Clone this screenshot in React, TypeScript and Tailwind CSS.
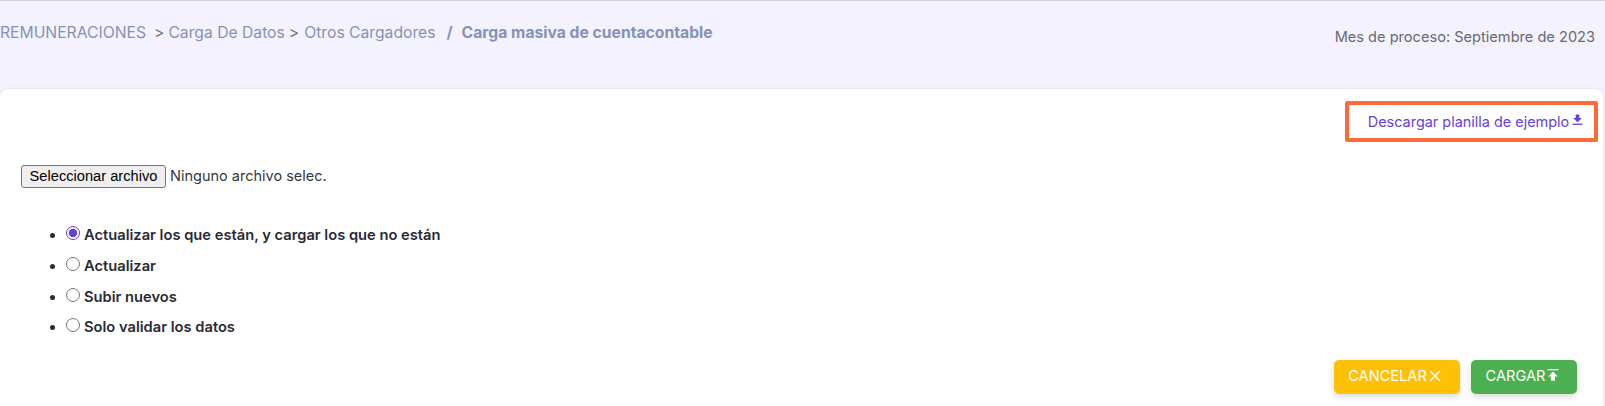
import { X } from "lucide-react";

const options = [
  { label: "Actualizar los que están, y cargar los que no están", checked: true },
  { label: "Actualizar", checked: false },
  { label: "Subir nuevos", checked: false },
  { label: "Solo validar los datos", checked: false },
];

function UploadIcon() {
  return (
    <svg width="12" height="13" viewBox="0 0 12 13" fill="currentColor" className="ml-[2px] mt-[-3px]">
      <rect x="0.5" y="0" width="11" height="1.3" />
      <path d="M6 2.4 10.8 7.4H8v4.4H4V7.4H1.2z" />
    </svg>
  );
}

function DownloadIcon() {
  return (
    <svg width="11" height="12" viewBox="0 0 11 12" fill="currentColor" className="ml-[3px] mt-[-4px]">
      <path d="M3.7 0.5h3.6v3.6h2.6L5.5 8.2 1.1 4.1h2.6z" />
      <rect x="0.5" y="9.6" width="10" height="1.3" />
    </svg>
  );
}

export default function App() {
  return (
    <div className="flex h-[406px] w-[1605px] flex-col overflow-hidden border-t border-[#d6d3e4] bg-[#f4f2fe] font-['Inter',sans-serif]">
      <header className="flex h-[88px] items-start justify-between pr-[10px]">
        <div className="flex items-center pt-[22px] text-[15.7px] leading-5 text-[#8492b6]">
          <span>REMUNERACIONES</span>
          <span className="ml-[8px] text-[#6b7280]">&gt;</span>
          <span className="ml-[4px]">Carga De Datos</span>
          <span className="ml-[4px] text-[#6b7280]">&gt;</span>
          <span className="ml-[5px]">Otros Cargadores</span>
          <span className="ml-[11px] font-bold">/</span>
          <span className="ml-[9px] font-bold">Carga masiva de cuentacontable</span>
        </div>
        <div className="pt-[26px] text-[14.6px] leading-5 text-[#666a73]">Mes de proceso: Septiembre de 2023</div>
      </header>

      <main className="mr-[2px] flex flex-1 flex-col rounded-t-[8px] bg-white shadow-[0_0_3px_rgba(80,70,140,0.14)]">
        <div className="flex justify-end pr-[5px] pt-[12px]">
          <a className="flex h-[41px] w-[253px] items-center justify-center rounded-[2px] border-4 border-[#ff6a3d] pl-[8px] text-[14.45px] text-[#6741d9]">
            Descargar planilla de ejemplo
            <DownloadIcon />
          </a>
        </div>

        <div className="ml-[21px] mt-[23px] flex items-center text-[14.5px] text-[#333740]">
          <button className="h-[23px] w-[145px] rounded-[3px] border border-[#767676] bg-[#efefef] font-['Liberation_Sans',sans-serif] text-[14.65px] text-black">
            Seleccionar archivo
          </button>
          <span className="ml-[4px] pb-[2px]">Ninguno archivo selec.</span>
        </div>

        <ul className="ml-[66px] mt-[36.5px] flex list-disc flex-col gap-[10.7px] text-[14.7px] leading-5 font-semibold text-[#2a2a35]">
          {options.map((o) => (
            <li key={o.label}>
              <label className="block">
                <input
                  type="radio"
                  name="mode"
                  defaultChecked={o.checked}
                  className="m-0 mr-[4px] inline-block h-[14px] w-[14px] align-baseline accent-[#6741d9]"
                />
                {o.label}
              </label>
            </li>
          ))}
        </ul>

        <div className="mt-[23px] flex justify-end gap-[11px] pr-[26px] text-[14.6px] text-white">
          <button className="flex h-[34px] w-[126px] items-center justify-center rounded-[5px] bg-[#ffc107] pr-[2px] shadow-[0_3px_6px_rgba(0,0,0,0.14)]">
            CANCELAR
            <X size={18} strokeWidth={1.9} className="ml-[-1px] mt-[-2px]" />
          </button>
          <button className="flex h-[34px] w-[106px] items-center justify-center rounded-[5px] bg-[#4caf50] pr-[3px] shadow-[0_3px_6px_rgba(0,0,0,0.14)]">
            CARGAR
            <UploadIcon />
          </button>
        </div>
      </main>
    </div>
  );
}
